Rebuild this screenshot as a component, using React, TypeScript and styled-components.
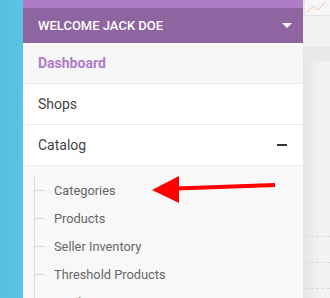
import styled, { createGlobalStyle } from 'styled-components';

const GlobalStyle = createGlobalStyle`
  html, body {
    margin: 0;
    padding: 0;
    width: 330px;
    height: 298px;
    overflow: hidden;
    font-family: Roboto, 'Liberation Sans', sans-serif;
  }
`;

const Page = styled.div`
  display: flex;
  width: 330px;
  height: 298px;
  overflow: hidden;
`;

const BlueStrip = styled.div`
  width: 23px;
  flex-shrink: 0;
  background: linear-gradient(90deg, #59bfe0, #5cc3e2);
`;

const Sidebar = styled.div`
  width: 280px;
  flex-shrink: 0;
  display: flex;
  flex-direction: column;
  background: #fff;
  position: relative;
  overflow: hidden;
`;

const TopBand = styled.div`
  height: 8px;
  flex-shrink: 0;
  background: #af7cc8;
`;

const Welcome = styled.div`
  height: 35px;
  flex-shrink: 0;
  background: #8e64a1;
  color: #fff;
  display: flex;
  align-items: center;
  justify-content: space-between;
  padding: 0 11px 0 15px;
  font-size: 13px;
  font-weight: 500;
`;

const Caret = styled.span`
  width: 0;
  height: 0;
  border-left: 5px solid transparent;
  border-right: 5px solid transparent;
  border-top: 5px solid #fff;
`;

const MenuRow = styled.div<{ $active?: boolean }>`
  height: 40px;
  flex-shrink: 0;
  display: flex;
  align-items: center;
  justify-content: space-between;
  padding: 0 16px 0 15px;
  border-bottom: 1px solid #ececec;
  background: ${(p) => (p.$active ? '#f7f7f7' : '#fff')};
  color: ${(p) => (p.$active ? '#ad7cc9' : '#444')};
  font-size: 14px;
  font-weight: ${(p) => (p.$active ? 700 : 400)};
`;

const Minus = styled.span`
  width: 10px;
  height: 2px;
  background: #333;
`;

const SubMenu = styled.div`
  flex: 1;
  flex-shrink: 0;
  background: #f8f8f8;
  padding: 10px 0 0 11px;
`;

const SubList = styled.div`
  border-left: 1px solid #dcdcdc;
  height: 100%;
  display: flex;
  flex-direction: column;
`;

const SubItem = styled.div`
  height: 28px;
  flex-shrink: 0;
  display: flex;
  align-items: center;
  gap: 9px;
  color: #666;
  font-size: 12.8px;
  &::before {
    content: '';
    width: 10px;
    height: 1px;
    background: #d6d6d6;
  }
`;

const Arrow = styled.svg`
  position: absolute;
  left: 105px;
  top: 174px;
`;

const Main = styled.div`
  flex: 1;
  background: linear-gradient(90deg, #e4e4e4, #f2f2f2 60%, #f3f3f3);
  display: flex;
  flex-direction: column;
`;

const ChartBit = styled.div`
  height: 15px;
  flex-shrink: 0;
  margin-left: 2px;
  border-bottom: 1px solid #dde6ec;
  background: #f6f6f6;
`;

const Gap = styled.div<{ $h: number; $bg?: string }>`
  height: ${(p) => p.$h}px;
  flex-shrink: 0;
  background: ${(p) => p.$bg || 'transparent'};
`;

const DotLine = styled.div`
  height: 25px;
  flex-shrink: 0;
  border-bottom: 1px dashed #dadada;
  margin-left: 2px;
`;

export default function App() {
  const subs = ['Categories', 'Products', 'Seller Inventory', 'Threshold Products', 'Attributes'];
  return (
    <>
      <GlobalStyle />
      <Page>
        <BlueStrip />
        <Sidebar>
          <TopBand />
          <Welcome>
            WELCOME JACK DOE
            <Caret />
          </Welcome>
          <MenuRow $active>Dashboard</MenuRow>
          <MenuRow>Shops</MenuRow>
          <MenuRow>
            Catalog
            <Minus />
          </MenuRow>
          <SubMenu>
            <SubList>
              {subs.map((s) => (
                <SubItem key={s}>{s}</SubItem>
              ))}
            </SubList>
          </SubMenu>
          <Arrow width="150" height="32" viewBox="0 0 150 32">
            <line x1="48" y1="14.5" x2="147" y2="11" stroke="#ff0000" strokeWidth="4" />
            <polygon points="24,16 51,2 51,29" fill="#ff0000" />
          </Arrow>
        </Sidebar>
        <Main>
          <ChartBit>
            <svg width="25" height="14" viewBox="0 0 25 14">
              <polyline points="2,12 8,5 13,9 20,1" fill="none" stroke="#f4c3a0" strokeWidth="1" />
            </svg>
          </ChartBit>
          <Gap $h={31} $bg="#f1f1f1" />
          <Gap $h={14} $bg="#e9e9e9" />
          <Gap $h={150} />
          <DotLine />
          <DotLine />
          <DotLine />
        </Main>
      </Page>
    </>
  );
}
